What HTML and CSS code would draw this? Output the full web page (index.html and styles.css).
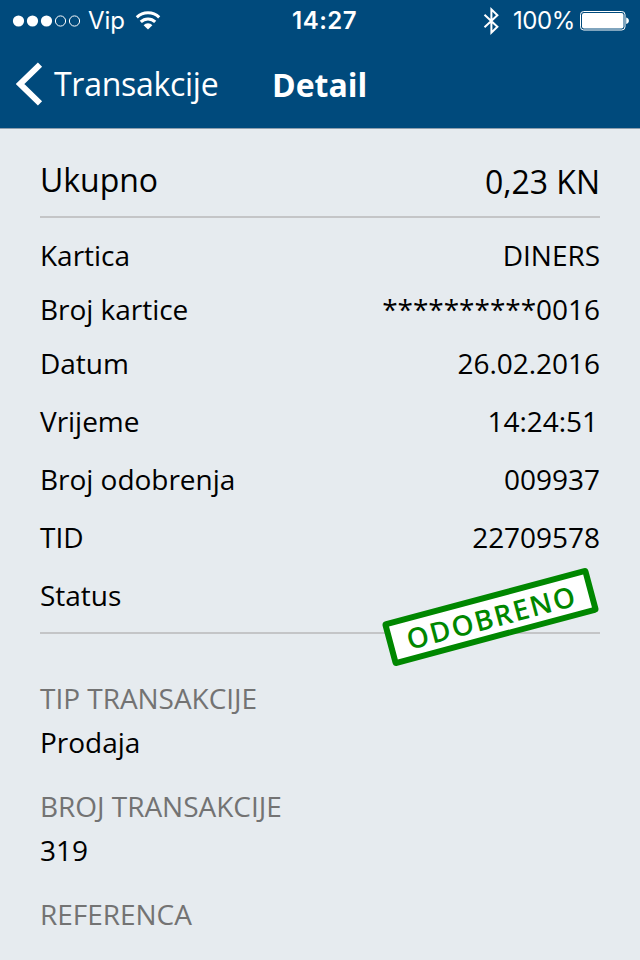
FILE: index.html
```html
<!DOCTYPE html>
<html lang="hr">
<head>
    <meta charset="UTF-8">
    <meta name="viewport" content="width=device-width, initial-scale=1.0">
    <title>Detail</title>
    <link rel="stylesheet" href="styles.css">
</head>
<body>
    <header class="header">
        <div class="status-bar">
            <div class="status-left">
                <svg class="signal" width="69" height="14" viewBox="0 0 69 14">
                    <g fill="#fff">
                        <circle cx="6.5" cy="7" r="5.6"/>
                        <circle cx="20.5" cy="7" r="5.6"/>
                        <circle cx="34.5" cy="7" r="5.6"/>
                    </g>
                    <g fill="none" stroke="#fff">
                        <circle cx="48.5" cy="7" r="5.1"/>
                        <circle cx="62.5" cy="7" r="5.1"/>
                    </g>
                </svg>
                <span class="carrier">Vip</span>
                <svg class="wifi" width="26" height="20" viewBox="0 0 26 20">
                    <g fill="none" stroke="#fff" stroke-width="3">
                        <path d="M1.8 7.4a16 16 0 0 1 22.4 0"/>
                        <path d="M5.8 11.9a10.2 10.2 0 0 1 14.4 0"/>
                    </g>
                    <path d="M8.6 15.2a6.2 6.2 0 0 1 8.8 0L13 19.6z" fill="#fff"/>
                </svg>
            </div>
            <span class="clock">14:27</span>
            <div class="status-right">
                <svg class="bluetooth" width="17" height="28" viewBox="0 0 17 28">
                    <path d="M1.5 7.8L14.4 19.8L8.4 25.6V2.4L14.4 8.2L1.5 20.2" fill="none" stroke="#fff" stroke-width="2"/>
                </svg>
                <span class="percent">100%</span>
                <svg class="battery" width="50" height="20" viewBox="0 0 50 20">
                    <rect x=".5" y=".5" width="44.5" height="18.5" rx="3.2" fill="none" stroke="#fff"/>
                    <rect x="2" y="2" width="41.5" height="15.5" rx="2" fill="#fff"/>
                    <path d="M46.2 6.4c3.6.8 3.6 5.8 0 6.6z" fill="#fff"/>
                </svg>
            </div>
        </div>
        <nav class="nav-bar">
            <a class="back" href="#">
                <svg class="chevron" width="28" height="44" viewBox="0 0 28 44">
                    <path d="M24 2.6L4 22L24 41.4" fill="none" stroke="#fff" stroke-width="6"/>
                </svg>
                <span class="back-label">Transakcije</span>
            </a>
            <h1 class="title">Detail</h1>
        </nav>
    </header>

    <main class="content">
        <div class="total">
            <span>Ukupno</span>
            <span class="amount">0,23 KN</span>
        </div>

        <div class="details">
            <div class="row"><span>Kartica</span><span>DINERS</span></div>
            <div class="row"><span>Broj kartice</span><span>**********0016</span></div>
            <div class="row datum"><span>Datum</span><span>26.02.2016</span></div>
            <div class="row tall"><span>Vrijeme</span><span class="time">14:24:51</span></div>
            <div class="row tall"><span>Broj odobrenja</span><span>009937</span></div>
            <div class="row tall"><span>TID</span><span>22709578</span></div>
            <div class="row tall"><span>Status</span></div>
            <div class="stamp">ODOBRENO</div>
        </div>

        <dl class="info">
            <dt>TIP TRANSAKCIJE</dt>
            <dd>Prodaja</dd>
            <dt>BROJ TRANSAKCIJE</dt>
            <dd>319</dd>
            <dt>REFERENCA</dt>
        </dl>
    </main>
</body>
</html>
```

FILE: styles.css
```css
* {
    box-sizing: border-box;
}

body {
    margin: 0;
    height: 960px;
    overflow: hidden;
    background-color: #e6ebef;
    color: #000;
    font-family: 'Open Sans', 'Noto Sans', sans-serif;
    font-size: 28px;
    letter-spacing: -0.03px;
}

.header {
    height: 129px;
    background-color: #004a7c;
    border-bottom: 1px solid #8d9eae;
    color: #fff;
}

.status-bar {
    display: grid;
    grid-template-columns: 280px auto 1fr;
    align-items: center;
    height: 41px;
    padding: 0 10px 0 12px;
    font-family: Inter, sans-serif;
    font-size: 24px;
    letter-spacing: 0;
    line-height: 41px;
}

.status-left,
.status-right {
    display: flex;
    align-items: center;
}

.status-right {
    justify-content: flex-end;
}

.carrier {
    margin: 0 10px 0 7px;
}

.wifi {
    margin-bottom: 2px;
}

.clock {
    font-weight: 600;
    letter-spacing: 0.5px;
}

.percent {
    margin: 0 5px 0 13px;
    letter-spacing: -0.4px;
}

.nav-bar {
    display: flex;
    align-items: center;
    height: 86px;
}

.back {
    display: flex;
    align-items: center;
    width: 272px;
    padding-left: 16px;
    color: #fff;
    text-decoration: none;
}

.back-label {
    margin: 0 0 2px 10px;
    font-size: 32px;
    letter-spacing: -0.28px;
}

.title {
    margin: 0;
    font-size: 32px;
    font-weight: 700;
}

.content {
    padding: 0 40px;
}

.total {
    display: flex;
    justify-content: space-between;
    height: 89px;
    padding-top: 29px;
    border-bottom: 2px solid #c4c5c7;
    font-size: 32px;
    line-height: 44px;
}

.amount {
    padding-top: 2px;
}

.details {
    position: relative;
    height: 416px;
    padding-top: 10px;
    border-bottom: 2px solid #c4c5c7;
}

.row {
    display: flex;
    justify-content: space-between;
    line-height: 54px;
}

.datum {
    margin-bottom: 2px;
}

.tall {
    line-height: 58px;
}

.time {
    padding-right: 2px;
}

/* lies over the bottom rule */
.stamp {
    position: absolute;
    right: 3px;
    bottom: -8px;
    width: 213px;
    height: 46px;
    padding-left: 2px;
    border: 6px solid #008700;
    border-radius: 4px;
    background-color: #fff;
    color: #008700;
    font-weight: 600;
    letter-spacing: 1.8px;
    line-height: 34px;
    text-align: center;
    transform: rotate(-15deg);
}

.info {
    margin: 42px 0 0;
    line-height: 44px;
}

.info dt {
    color: #737373;
}

.info dd {
    margin: 0 0 20px;
}
```
